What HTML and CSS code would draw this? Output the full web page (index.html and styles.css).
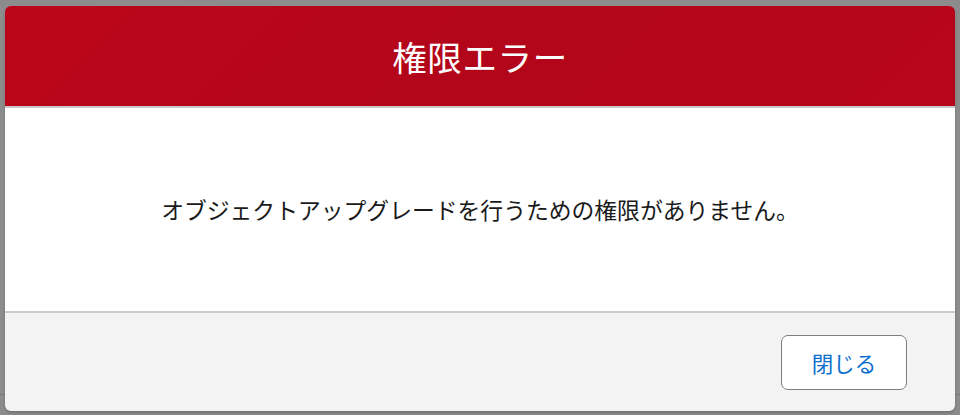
FILE: index.html
```html
<!DOCTYPE html>
<html lang="ja">
  <head>
    <meta charset="UTF-8" />
    <meta name="viewport" content="width=device-width, initial-scale=1.0" />
    <title>権限エラー</title>
    <link rel="stylesheet" href="styles.css">
  </head>
  <body>
    <!-- Error modal -->
    <div class="modal">
      <div class="modal-header">
        <h2>権限エラー</h2>
      </div>

      <div class="modal-body">
        <p>オブジェクトアップグレードを行うための権限がありません。</p>
      </div>

      <div class="modal-footer">
        <button class="btn-close">閉じる</button>
      </div>
    </div>
  </body>
</html>
```

FILE: styles.css
```css
/* Dimmed page behind the modal */
body {
  margin: 0;
  padding: 6px 5px 4px;
  height: 415px;
  box-sizing: border-box;
  font-family: "Noto Sans CJK JP", "Noto Sans", sans-serif;
  background:
    linear-gradient(to bottom, transparent 394px, #7a7a7a 394px, #7a7a7a 395px, transparent 395px),
    #8c8c8c;
  overflow: hidden;
}

/* Modal box */
.modal {
  display: flex;
  flex-direction: column;
  height: 405px;
  border-radius: 6px;
  overflow: hidden;
  box-shadow: 0 2px 3px rgba(0, 0, 0, 0.18);
}

/* Red header */
.modal-header {
  height: 100px;
  display: flex;
  justify-content: center;
  align-items: center;
  background: linear-gradient(135deg, #bc0519 0%, #b3061a 50%, #b8061a 100%);
  border-bottom: 2px solid #c9c9c9;
}

.modal-header h2 {
  margin: 0;
  color: #fff;
  font-size: 34.5px;
  font-weight: 400;
  letter-spacing: 0.6px;
}

/* Message area */
.modal-body {
  flex: 1;
  display: flex;
  justify-content: center;
  align-items: center;
  background: #fff;
  border-bottom: 2px solid #c9c9c9;
}

.modal-body p {
  margin: 0;
  font-size: 22.8px;
  color: #1a1a1a;
}

/* Footer with close button */
.modal-footer {
  height: 98px;
  box-sizing: border-box;
  display: flex;
  justify-content: flex-end;
  align-items: center;
  padding: 0 48px;
  background: #f3f3f3;
}

.btn-close {
  width: 126px;
  height: 55px;
  font-family: inherit;
  font-size: 21.5px;
  color: #0b70cf;
  background: #fff;
  border: 1px solid #7d7d7d;
  border-radius: 7px;
  cursor: pointer;
}
```
